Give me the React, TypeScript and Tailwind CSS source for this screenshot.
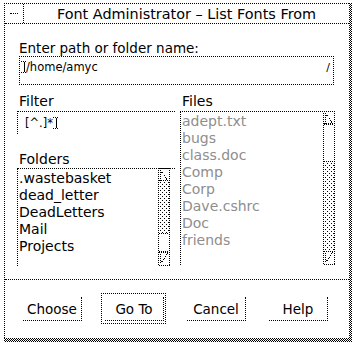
import React from "react";

function ScrollBar({ h, thumbY, thumbH }: { h: number; thumbY: number; thumbH: number }) {
	const w = 12;
	return (
		<svg width={w} height={h} shapeRendering="crispEdges" className="block">
			<defs>
				<pattern id="stip" width="4" height="4" patternUnits="userSpaceOnUse">
					<rect x="0" y="0" width="1" height="1" fill="#000" />
					<rect x="2" y="2" width="1" height="1" fill="#000" />
				</pattern>
			</defs>
			<rect x="1" y="13" width={w - 2} height={h - 27} fill="url(#stip)" />
			<rect x="1" y={thumbY} width={w - 2} height={thumbH} fill="#fff" />
			<line x1="1" y1={thumbY + 0.5} x2={w - 1} y2={thumbY + 0.5} stroke="#000" strokeDasharray="1 1" />
			<line x1="1" y1={thumbY + thumbH - 0.5} x2={w - 1} y2={thumbY + thumbH - 0.5} stroke="#000" strokeDasharray="1 1" />
			<rect x="0.5" y="0.5" width={w - 1} height={h - 1} fill="none" stroke="#000" strokeDasharray="1 1" />
			{/* top arrow */}
			<polyline points="2.5,12.5 2.5,2.5 9.5,12.5" fill="none" stroke="#000" strokeDasharray="1 1" />
			<line x1="1" y1="12.5" x2={w - 1} y2="12.5" stroke="#000" strokeDasharray="1 1" />
			{/* bottom arrow */}
			<line x1="1" y1={h - 13.5} x2={w - 1} y2={h - 13.5} stroke="#000" strokeDasharray="1 1" />
			<polyline points={`2.5,${h - 12.5} 2.5,${h - 2.5} 9.5,${h - 12.5}`} fill="none" stroke="#000" strokeDasharray="1 1" />
		</svg>
	);
}

function IBeam() {
	return (
		<svg width="6" height="12" shapeRendering="crispEdges" className="block">
			<line x1="0" y1="0.5" x2="6" y2="0.5" stroke="#000" strokeDasharray="1 1" />
			<line x1="3.5" y1="1" x2="3.5" y2="11" stroke="#000" />
			<line x1="0" y1="11.5" x2="6" y2="11.5" stroke="#000" strokeDasharray="1 1" />
		</svg>
	);
}

const folders = [".wastebasket", "dead_letter", "DeadLetters", "Mail", "Projects"];
const files = ["adept.txt", "bugs", "class.doc", "Comp", "Corp", "Dave.cshrc", "Doc", "friends"];

function Button({ label, isDefault }: { label: string; isDefault?: boolean }) {
	return (
		<div className="relative w-[59px] h-[24px]">
			{isDefault && (
				<div className="absolute -left-[4px] -top-[4px] -right-[2px] -bottom-[3px] border border-dotted border-black" />
			)}
			<div className="h-full border-r border-b border-dotted border-black flex items-center justify-center text-[13.5px] leading-[16px]">
				{label}
			</div>
		</div>
	);
}

export default function App() {
	return (
		<div className="w-[352px] h-[342px] bg-white overflow-hidden font-['DejaVu_Sans',sans-serif] text-black">
			<div className="ml-[4px] mt-[3px] w-[348px] h-[339px] pr-[3px] pb-[4px] bg-[repeating-conic-gradient(#000_0%_25%,#fff_0%_50%)] bg-[length:2px_2px]">
				<div className="h-full bg-white border-l border-t border-dotted border-black flex flex-col">
					{/* title bar */}
					<div className="h-[20px] border-b border-dotted border-black flex">
						<div className="w-[19px] border-r border-dotted border-black flex items-center justify-center">
							<div className="w-[8px] border-t border-dotted border-black" />
						</div>
						<div className="flex-1 text-center text-[14.4px] leading-[20px]">
							Font Administrator – List Fonts From
						</div>
					</div>

					<div className="pl-[14px] pr-[14px] mt-[16px] text-[13.5px] leading-[16px]">Enter path or folder name:</div>
					<div className="ml-[14px] w-[315px] h-[29px] border border-dotted border-black flex items-start pt-[4px] pl-[1px] pr-[3px]">
						<IBeam />
						<span className="text-[11.5px] leading-[13px] ml-[-1px]">/home/amyc</span>
						<span className="ml-auto text-[11px] leading-[14px]">/</span>
					</div>

					<div className="flex mt-[8px]">
						{/* left column */}
						<div className="ml-[12px] w-[158px] flex flex-col">
							<div className="pl-[2px] text-[14px] leading-[16px]">Filter</div>
							<div className="mt-[2px] h-[23px] border-l border-t border-dotted border-black flex items-center pl-[7px]">
								<span className="text-[11.5px] leading-[14px]">[^.]*</span>
								<IBeam />
							</div>
							<div className="mt-[17px] pl-[2px] text-[14px] leading-[16px]">Folders</div>
							<div className="mt-[1px] h-[98px] border-l border-t border-dotted border-black flex">
								<div className="flex-1 pl-[1px] pt-[1px]">
									{folders.map((f) => (
										<div key={f} className="text-[14px] leading-[17px]">
											{f}
										</div>
									))}
								</div>
								<div className="mr-[5px] -mt-px">
									<ScrollBar h={98} thumbY={65} thumbH={19} />
								</div>
							</div>
						</div>

						{/* right column */}
						<div className="ml-[5px] w-[155px] flex flex-col">
							<div className="pl-[2px] text-[14px] leading-[16px]">Files</div>
							<div className="mt-[2px] h-[154px] border-l border-t border-dotted border-black flex">
								<div className="flex-1 pl-[1px] pt-px text-[#8e8e8e]">
									{files.map((f) => (
										<div key={f} className="text-[14px] leading-[17px]">
											{f}
										</div>
									))}
								</div>
								<div className="-mt-px">
									<ScrollBar h={154} thumbY={13} thumbH={38} />
								</div>
							</div>
						</div>
					</div>

					<div className="mt-[13px] border-t border-dotted border-black" />

					<div className="mt-[17px] pl-[18px] flex gap-[23px]">
						<Button label="Choose" />
						<Button label="Go To" isDefault />
						<Button label="Cancel" />
						<Button label="Help" />
					</div>
				</div>
			</div>
		</div>
	);
}
